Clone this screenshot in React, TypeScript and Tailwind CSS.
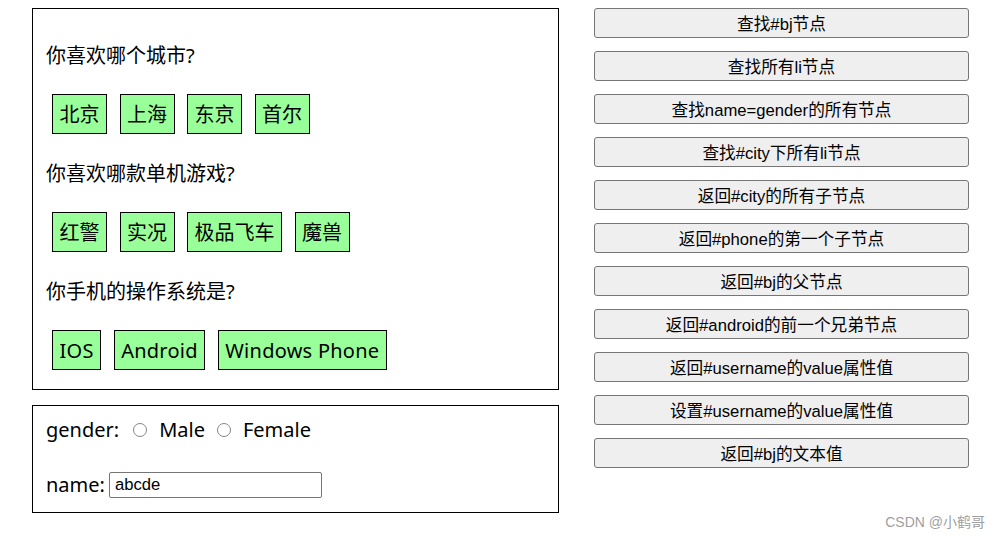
const cjk = '"Noto Sans", "Noto Sans CJK SC", sans-serif'
const btnFont = '"Liberation Sans", "Noto Sans CJK SC", sans-serif'

const groups = [
  { question: '你喜欢哪个城市?', items: ['北京', '上海', '东京', '首尔'] },
  { question: '你喜欢哪款单机游戏?', items: ['红警', '实况', '极品飞车', '魔兽'] },
  { question: '你手机的操作系统是?', items: ['IOS', 'Android', 'Windows Phone'] },
]

const buttons = [
  '查找#bj节点',
  '查找所有li节点',
  '查找name=gender的所有节点',
  '查找#city下所有li节点',
  '返回#city的所有子节点',
  '返回#phone的第一个子节点',
  '返回#bj的父节点',
  '返回#android的前一个兄弟节点',
  '返回#username的value属性值',
  '设置#username的value属性值',
  '返回#bj的文本值',
]

function Radio() {
  return (
    <span className="inline-block w-[14px] h-[14px] rounded-full border border-[#858585] bg-white shrink-0" />
  )
}

export default function App() {
  return (
    <div
      className="relative w-[1001px] h-[542px] bg-white text-black overflow-hidden"
      style={{ fontFamily: cjk }}
    >
      <div className="flex pt-[8px] pl-[32px]">
        {/* left column */}
        <div className="flex flex-col w-[527px]">
          <div className="border border-black px-[13px] pt-[34px] pb-[19px]">
            {groups.map((g, gi) => (
              <div key={g.question} className={gi > 0 ? 'mt-[27px]' : ''}>
                <div className="h-[26px] leading-[26px] text-[20px]">{g.question}</div>
                <ul className="flex gap-[12.5px] ml-[6px] mt-[25px]">
                  {g.items.map(item => (
                    <li
                      key={item}
                      className={
                        'h-[40px] leading-[38px] pt-[1px] px-[6.5px] border border-black bg-[#99ff99] text-[20px]' +
                        (/^[A-Za-z ]+$/.test(item) ? ' tracking-[0.25px]' : '')
                      }
                    >
                      {item}
                    </li>
                  ))}
                </ul>
              </div>
            ))}
          </div>

          <div className="mt-[15px] border border-black px-[13px] pt-[11px] pb-[14px] text-[20px]">
            <div className="flex items-center h-[26px]">
              <span>gender:</span>
              <span className="ml-[14px]"><Radio /></span>
              <span className="ml-[12px]">Male</span>
              <span className="ml-[12px]"><Radio /></span>
              <span className="ml-[12px]">Female</span>
            </div>
            <div className="flex items-center h-[26px] mt-[29px]">
              <span>name:</span>
              <input
                readOnly
                value="abcde"
                className="ml-[4px] w-[213px] h-[26px] border border-[#767676] rounded-[2px] px-[5px] text-[16.67px] outline-none"
                style={{ fontFamily: btnFont }}
              />
            </div>
          </div>
        </div>

        {/* right column */}
        <div className="flex flex-col gap-[13px] ml-[35px] w-[375px]">
          {buttons.map(b => (
            <button
              key={b}
              className="flex items-center justify-center h-[30px] pt-[3px] w-full border border-[#767676] rounded-[3px] bg-[#efefef] text-[16.67px] leading-[24px] text-black"
              style={{ fontFamily: btnFont }}
            >
              {b}
            </button>
          ))}
        </div>
      </div>

      <div
        className="absolute right-[16px] bottom-[9px] text-[14px] text-[#a0a0a0]"
        style={{ fontFamily: btnFont }}
      >
        CSDN @小鹤哥
      </div>
    </div>
  )
}
